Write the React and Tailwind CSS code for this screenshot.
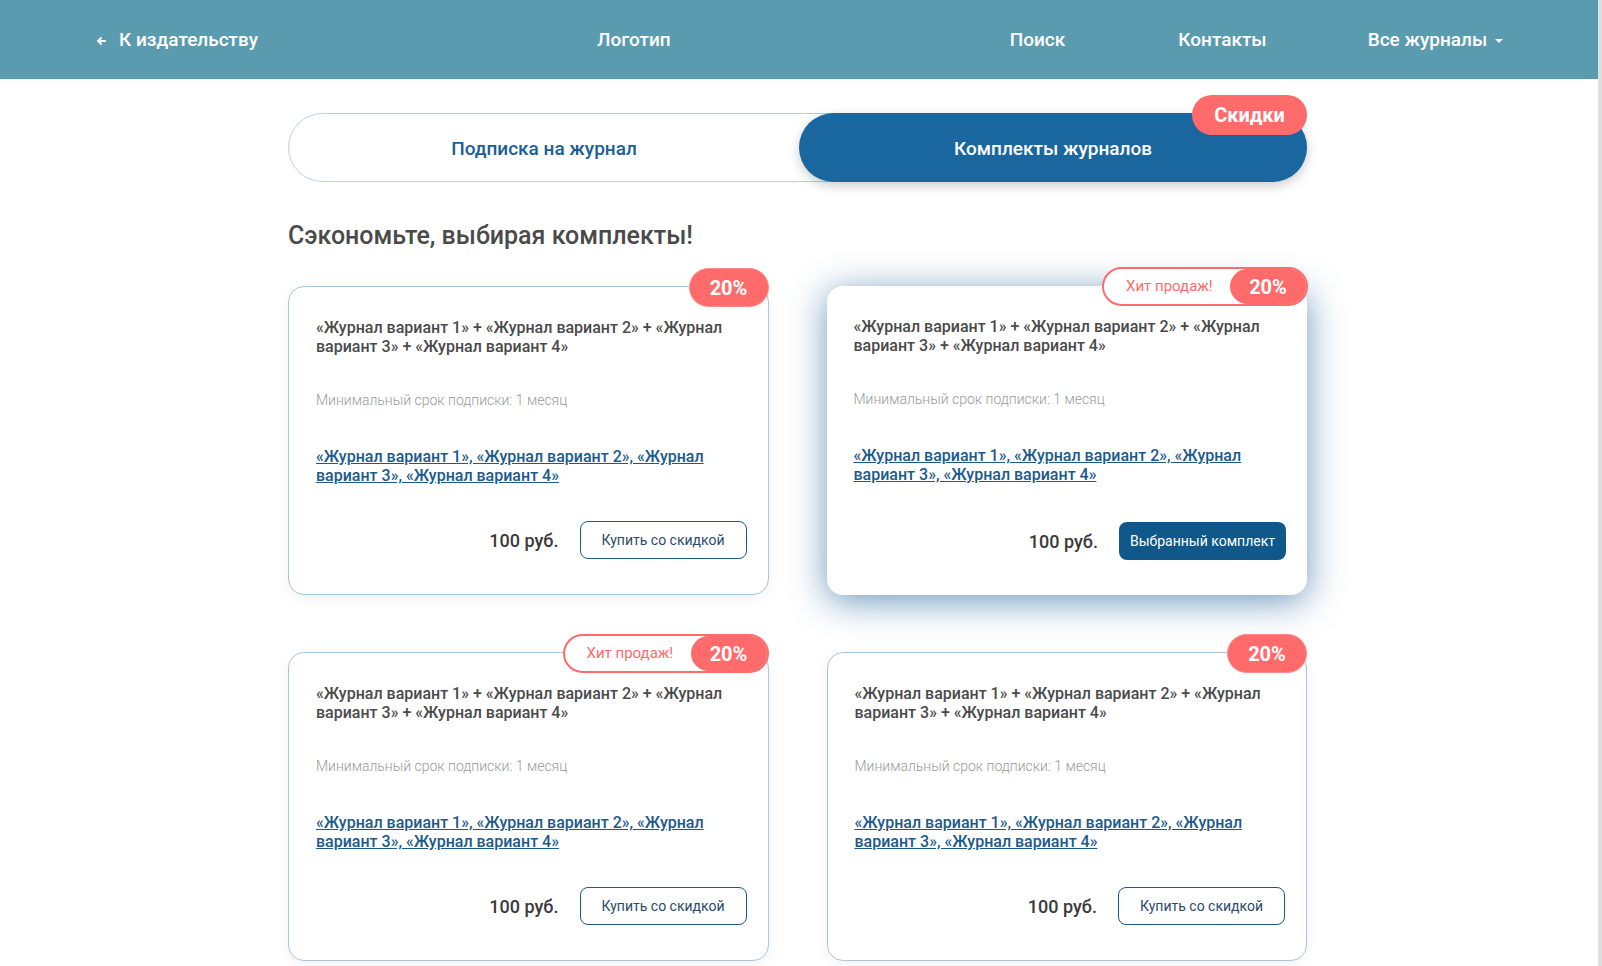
import React from "react";

const cards = [
  { hit: false, selected: false },
  { hit: true, selected: true },
  { hit: true, selected: false },
  { hit: false, selected: false },
];

function Badge({ hit }) {
  if (!hit) {
    return (
      <div className="absolute -top-[19px] -right-px h-[39px] w-[80px] rounded-full bg-[#ff6b6b] border border-[#ff8a8a] flex items-center justify-center text-white text-[20px] font-bold">
        20%
      </div>
    );
  }
  return (
    <div className="absolute -top-[19px] -right-px h-[39px] w-[206px] rounded-full bg-white border-2 border-[#ff6b6b] flex items-center justify-between pl-[22px]">
      <span className="text-[15px] text-[#ff6b6b]">Хит продаж!</span>
      <span className="h-[35px] w-[76px] rounded-full bg-[#ff6b6b] flex items-center justify-center text-white text-[20px] font-bold">
        20%
      </span>
    </div>
  );
}

function Card({ hit, selected }) {
  return (
    <div
      className={
        "relative h-[309px] rounded-[16px] bg-white flex flex-col pt-[31px] pl-[27px] pr-[21px] pb-[35px] " +
        (selected
          ? "shadow-[0_6px_36px_rgba(30,95,150,0.65)]"
          : "border border-[#a9c6de] shadow-[0_4px_14px_rgba(0,0,0,0.05)]")
      }
    >
      <Badge hit={hit} />
      <p className="text-[16px] leading-[19px] font-medium text-[#4a4a4a]">
        «Журнал вариант 1» + «Журнал вариант 2» + «Журнал вариант 3» + «Журнал вариант 4»
      </p>
      <p className="mt-[35px] text-[14px] leading-[19px] font-light text-[#9a9a9a]">
        Минимальный срок подписки: 1 месяц
      </p>
      <a href="#" className="mt-[37px] text-[16px] leading-[19px] font-medium text-[#1b5a8c] underline pr-[10px]">
        «Журнал вариант 1», «Журнал вариант 2», «Журнал вариант 3», «Журнал вариант 4»
      </a>
      <div className="mt-auto flex items-center justify-end gap-[21px]">
        <span className="text-[18px] font-medium text-[#3a3a3a]">100 руб.</span>
        {selected ? (
          <button className="h-[38px] w-[167px] rounded-[8px] bg-[#0f5889] text-white text-[14px]">
            Выбранный комплект
          </button>
        ) : (
          <button className="h-[38px] w-[167px] rounded-[8px] border-[1.5px] border-[#1a5a8a] text-[#2a4a6a] text-[14px]">
            Купить со скидкой
          </button>
        )}
      </div>
    </div>
  );
}

export default function App() {
  return (
    <div className="h-[966px] overflow-hidden flex bg-white" style={{ fontFamily: "Roboto, 'Noto Sans', sans-serif" }}>
      <div className="flex-1">
        <header className="h-[79px] pt-[2px] bg-[#5a9bb0] flex items-center text-white text-[19px] font-medium">
          <a href="#" className="ml-[96px] flex items-center gap-[12px]">
            <svg width="11" height="10" viewBox="0 0 11 10" fill="none" stroke="white" strokeWidth="1.8">
              <path d="M10 5H2M5.5 1.5L2 5l3.5 3.5" />
            </svg>
            К издательству
          </a>
          <span className="ml-[339px]">Логотип</span>
          <a href="#" className="ml-[339px]">Поиск</a>
          <a href="#" className="ml-[113px]">Контакты</a>
          <a href="#" className="ml-[101px] flex items-center gap-[8px]">
            Все журналы
            <span className="w-0 h-0 border-l-[4px] border-r-[4px] border-t-[4px] border-l-transparent border-r-transparent border-t-white" />
          </a>
        </header>

        <main className="ml-[288px] w-[1019px]">
          <div className="relative mt-[34px] h-[69px] rounded-full border border-[#b5d1ea] flex">
            <button className="w-[510px] pt-[3px] text-[19px] font-medium text-[#1a5f96]">Подписка на журнал</button>
            <button className="-my-px -mr-px flex-1 pt-[3px] rounded-full bg-[#1a67a0] text-white text-[19px] font-medium shadow-[0_4px_12px_rgba(0,0,0,0.2)]">
              Комплекты журналов
            </button>
            <span className="absolute -top-[19px] -right-px h-[40px] w-[115px] rounded-full bg-[#ff6b6b] flex items-center justify-center text-white text-[20px] font-bold">
              Скидки
            </span>
          </div>

          <h2 className="mt-[38px] text-[25px] leading-[32px] font-medium text-[#4a4a4a]">
            Сэкономьте, выбирая комплекты!
          </h2>

          <div className="mt-[34px] grid grid-cols-2 gap-x-[58px] gap-y-[57px]">
            {cards.map((c, i) => (
              <Card key={i} {...c} />
            ))}
          </div>
        </main>
      </div>
      <div className="w-[4px] bg-[#dedede]" />
    </div>
  );
}
